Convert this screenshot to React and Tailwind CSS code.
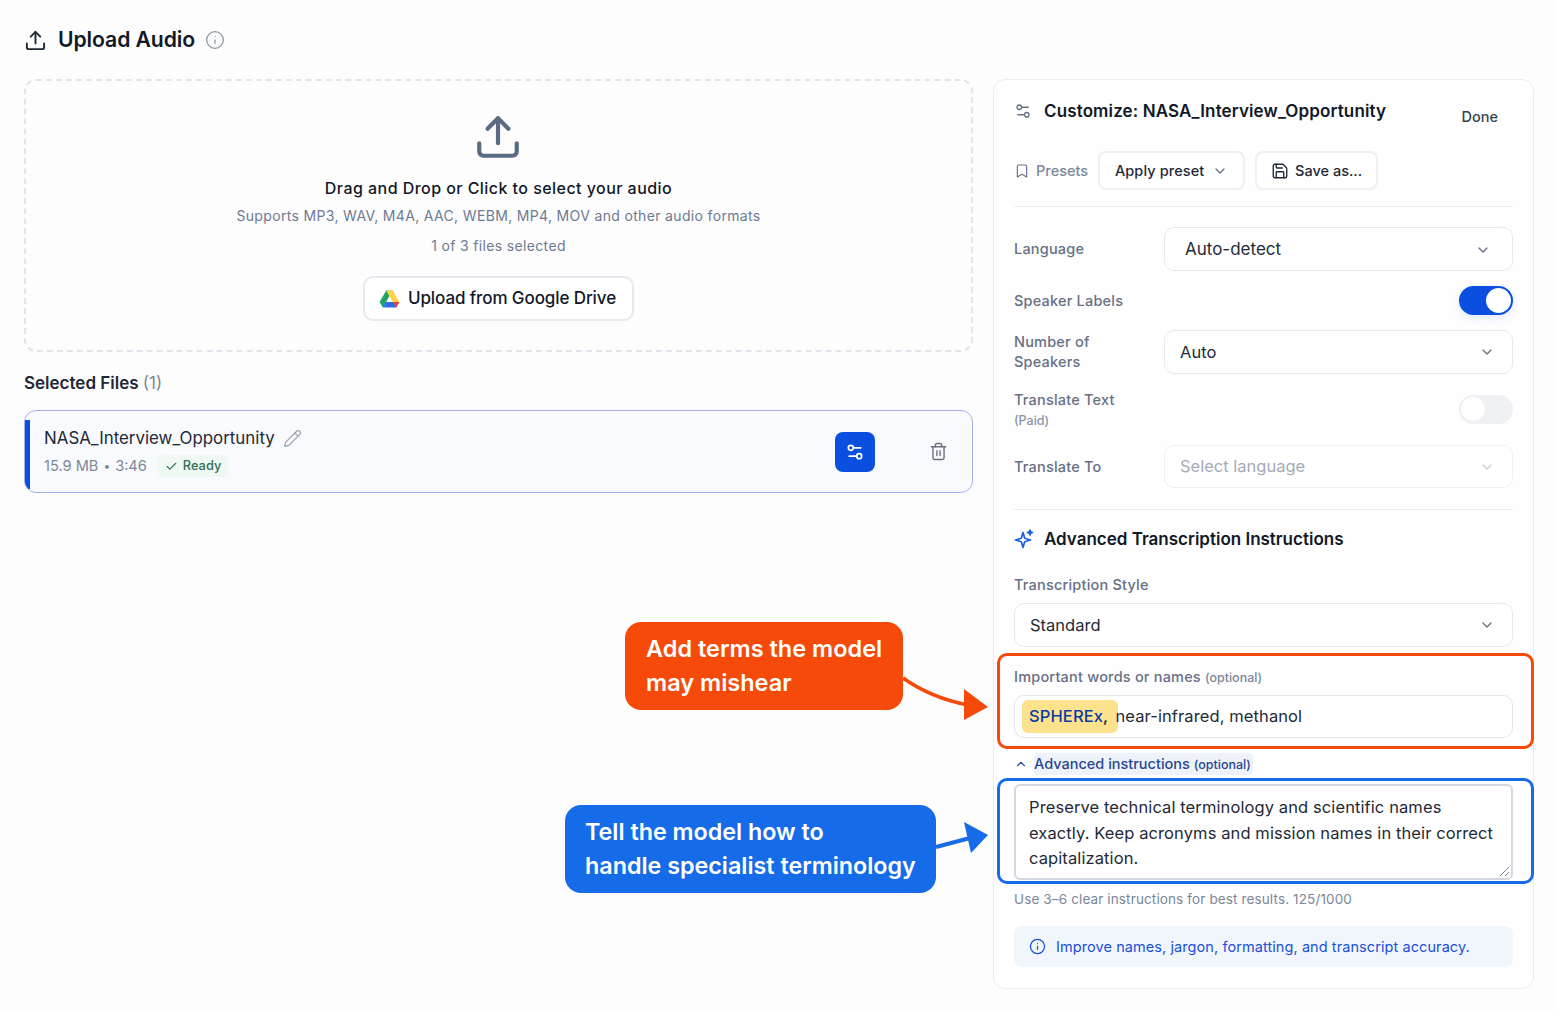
import React from 'react';
import { ChevronDown, ChevronUp, Upload, Info, Settings2, Trash2, Pencil, Check, Bookmark, Save } from 'lucide-react';

const selectCls = 'flex items-center justify-between rounded-[10px] border border-[#e6e9ef] bg-white text-[#1f2937]';
const labelCls = 'text-[14.5px] font-medium leading-[20px] tracking-[0.2px] text-[#667085]';

function DriveLogo() {
  return (
    <svg width="21" height="18" viewBox="0 0 21 18" className="shrink-0">
      <path d="M7.2 0.5h6.4L7 12.2l-3.2 5.3L0.6 12z" fill="#1fa463" />
      <path d="M13.6 0.5l6.8 11.5h-6.6L7.2 0.5z" fill="#ffd04b" />
      <path d="M6.8 12h13.6l-3.2 5.5H3.7z" fill="#2b6ee8" />
      <path d="M20.4 12l-3.2 5.5-3.4-5.5z" fill="#e8453c" />
    </svg>
  );
}

function Sparkle() {
  return (
    <svg width="20" height="20" viewBox="0 0 20 20" fill="none" stroke="#1d5fe0" strokeWidth="1.7" strokeLinejoin="round" className="shrink-0">
      <path d="M9 3.5l1.7 5.8 5.8 1.7-5.8 1.7L9 18.5l-1.7-5.8L1.5 11l5.8-1.7z" />
      <path d="M16 1l.6 1.9 1.9.6-1.9.6-.6 1.9-.6-1.9-1.9-.6 1.9-.6z" fill="#1d5fe0" />
    </svg>
  );
}

function Arrows() {
  return (
    <svg width="120" height="240" viewBox="0 0 120 240" className="absolute left-[890px] top-[640px]">
      <path d="M13 38C30 50 52 60 78 65" fill="none" stroke="#f54a0a" strokeWidth="3.5" />
      <path d="M74 49L98 67 74 80z" fill="#f54a0a" />
      <path d="M46 207L80 198" fill="none" stroke="#166be8" strokeWidth="4" />
      <path d="M74 182L98 195 81 213z" fill="#166be8" />
    </svg>
  );
}

export default function App() {
  return (
    <div className="relative h-[1010px] w-full overflow-hidden bg-[#fdfdfe] font-['Inter',sans-serif] text-[#111827]">
      {/* Header */}
      <div className="flex h-[79px] items-center pl-[24px] pt-[1px]">
        <Upload size={23} strokeWidth={2} className="text-[#1f2937]" />
        <h1 className="ml-[11px] text-[21.2px] font-semibold leading-none tracking-[-0.1px] text-[#111827]">Upload Audio</h1>
        <Info size={20} strokeWidth={1.6} className="ml-[10px] text-[#8c97a8]" />
      </div>

      <div className="flex items-start gap-[20px] pl-[24px]">
        {/* Left column */}
        <div className="w-[949px]">
          <div className="flex h-[273px] flex-col items-center rounded-[12px] border-2 border-dashed border-[#e1e5eb] pt-[31px]">
            <Upload size={50} strokeWidth={2} className="-ml-[1px] text-[#5b6b84]" />
            <p className="mt-[14px] text-[16px] font-medium leading-[24px] tracking-[0.45px] text-[#111827]">Drag and Drop or Click to select your audio</p>
            <p className="mt-[4px] text-[14px] leading-[24px] tracking-[0.34px] text-[#6d7a91]">Supports MP3, WAV, M4A, AAC, WEBM, MP4, MOV and other audio formats</p>
            <p className="mt-[6px] text-[14px] leading-[24px] tracking-[0.34px] text-[#6d7a91]">1 of 3 files selected</p>
            <button className="mt-[18px] flex h-[45px] w-[271px] items-center justify-center gap-[8px] rounded-[10px] border-2 border-[#e6e9ef] bg-white pr-[2px] pt-[1px] text-[17px] font-medium tracking-[-0.1px] text-[#111827]">
              <DriveLogo />
              Upload from Google Drive
            </button>
          </div>

          <h2 className="mt-[19px] text-[17px] font-semibold leading-[24px] text-[#1f2937]">
            Selected Files <span className="font-normal text-[#7c8798]">(1)</span>
          </h2>

          <div className="relative mt-[15px] flex h-[83px] items-center overflow-hidden rounded-[12px] border-[1.5px] border-[#a5b1ea] bg-[#f9fafe] pl-[19px] pr-[24.5px]">
            <div className="absolute bottom-[3px] left-0 top-[9px] w-[5px] bg-[#0a4fe0]" />
            <div className="mb-[1px] flex-1">
              <div className="flex items-center gap-[8px]">
                <span className="text-[16.9px] leading-[26px] text-[#1f2937]">NASA_Interview_Opportunity</span>
                <Pencil size={19} strokeWidth={1.5} className="text-[#9aa3b2]" />
              </div>
              <div className="mt-[4px] flex items-center text-[14.6px] leading-[22px] text-[#7c8798]">
                <span>15.9 MB</span>
                <span className="mx-[5px] text-[12px]">•</span>
                <span>3:46</span>
                <span className="ml-[11px] flex h-[22px] items-center gap-[5px] rounded-[5px] bg-[#f0f8f3] px-[7px] text-[12.8px] font-medium text-[#2f6f55]">
                  <Check size={13} strokeWidth={2} />
                  Ready
                </span>
              </div>
            </div>
            <button className="flex h-[40px] w-[40px] items-center justify-center rounded-[8px] bg-[#0a4fe0] text-white">
              <Settings2 size={20} strokeWidth={2} />
            </button>
            <Trash2 size={19} strokeWidth={1.8} className="ml-[54px] text-[#6b7280]" />
          </div>
        </div>

        {/* Right panel */}
        <div className="h-[910px] w-[541px] rounded-[12px] border border-[#e9ecf1] bg-[#fefefe] px-[20px]">
          <div className="flex items-start justify-between pr-[15px] pt-[19px]">
            <div className="flex items-center gap-[12px]">
              <Settings2 size={18} strokeWidth={1.7} className="text-[#667085]" />
              <span className="text-[17px] font-semibold leading-[24px] tracking-[0.13px] text-[#111827]">Customize: NASA_Interview_Opportunity</span>
            </div>
            <span className="mt-[6px] text-[14.5px] font-medium leading-[24px] text-[#374151]">Done</span>
          </div>

          <div className="mt-[22px] flex h-[39px] items-center">
            <Bookmark size={16} strokeWidth={1.7} className="text-[#667085]" />
            <span className="ml-[6px] text-[14.5px] font-medium text-[#7c8798]">Presets</span>
            <button className="ml-[10px] flex h-[39px] w-[147px] items-center justify-center gap-[8px] rounded-[8px] border-2 border-[#eef0f4] bg-white text-[14.5px] font-medium tracking-[0.1px] text-[#1f2937]">
              Apply preset <ChevronDown size={16} className="text-[#667085]" />
            </button>
            <button className="ml-[10px] flex h-[39px] w-[123px] items-center justify-center gap-[6px] rounded-[8px] border-2 border-[#eef0f4] bg-white text-[14.5px] font-medium text-[#1f2937]">
              <Save size={18} strokeWidth={1.8} /> Save as...
            </button>
          </div>

          <div className="mt-[16px] border-t border-[#eceef2]" />

          <div className="mt-[20px] flex items-center justify-between">
            <span className={labelCls}>Language</span>
            <div className={selectCls + ' h-[44px] w-[349px] pl-[20px] pr-[21px] pt-[1px] text-[17px]'}>
              Auto-detect <ChevronDown size={16} className="text-[#667085]" />
            </div>
          </div>

          <div className="mt-[15px] flex h-[29px] items-center justify-between">
            <span className={labelCls}>Speaker Labels</span>
            <div className="flex h-[29px] w-[54px] items-center justify-end rounded-full bg-[#0a4fe0] pr-[2px] shadow-[0_3px_8px_rgba(10,79,224,0.12)]">
              <div className="h-[25px] w-[25px] rounded-full bg-white" />
            </div>
          </div>

          <div className="mt-[15px] flex items-center justify-between">
            <span className={labelCls + ' w-[110px]'}>Number of Speakers</span>
            <div className={selectCls + ' h-[44px] w-[349px] pl-[15px] pr-[17px] text-[16.5px]'}>
              Auto <ChevronDown size={16} className="text-[#667085]" />
            </div>
          </div>

          <div className="mt-[21px] flex h-[28px] items-center justify-between">
            <div className={labelCls}>
              Translate Text
              <div className="mt-[3px] text-[12.5px] leading-[16px] tracking-normal text-[#8a94a6]">(Paid)</div>
            </div>
            <div className="flex h-[29px] w-[54px] items-center rounded-full bg-[#eef0f3] pl-[1px]">
              <div className="h-[26px] w-[26px] rounded-full border border-[#eef0f3] bg-white" />
            </div>
          </div>

          <div className="mt-[22px] flex items-center justify-between">
            <span className={labelCls}>Translate To</span>
            <div className="flex h-[43px] w-[349px] items-center justify-between rounded-[10px] border border-[#eef0f4] bg-white pl-[15px] pr-[17px] text-[16.5px] text-[#a3abb8]">
              Select language <ChevronDown size={16} className="text-[#c5cad3]" />
            </div>
          </div>

          <div className="mt-[21px] border-t border-[#eceef2]" />

          <div className="mt-[17px] flex h-[24px] items-center gap-[10px]">
            <Sparkle />
            <span className="text-[17px] font-semibold leading-[24px] text-[#111827]">Advanced Transcription Instructions</span>
          </div>

          <p className={labelCls + ' mt-[24px]'}>Transcription Style</p>
          <div className={selectCls + ' mt-[8px] h-[44px] pl-[15px] pr-[17px] text-[16.5px]'}>
            Standard <ChevronDown size={16} className="text-[#667085]" />
          </div>

          {/* Important words */}
          <div className="relative ml-[-17px] mr-[-21px] mt-[6px] h-[96px] rounded-[10px] border-[3px] border-[#f54a0a] pl-[14px] pr-[18px] pt-[11px]">
            <p className={labelCls}>
              Important words or names <span className="text-[12.5px] tracking-normal text-[#7c8798]">(optional)</span>
            </p>
            <div className="mt-[7px] flex h-[43px] items-center rounded-[10px] border border-[#e2e5ec] bg-white pl-[7px] text-[16.5px] tracking-[0.1px] text-[#1f2937]">
              <span className="mr-[-3px] flex h-[33px] items-center whitespace-pre rounded-[6px] bg-[#fde28e] pl-[7px] pr-[6px] font-medium text-[#0a3aa8]">SPHEREx<span className="text-[#1f2937]">, </span></span>
              near-infrared, methanol
            </div>
          </div>

          {/* Advanced instructions */}
          <div className="mt-[6px] flex h-[18px] items-center gap-[6px]">
            <ChevronUp size={14} strokeWidth={2} className="text-[#2b4f9e]" />
            <span className="rounded-[4px] bg-[#eef3fb] pr-[2px] text-[14.5px] font-medium text-[#27468f]">
              Advanced instructions <span className="text-[12.5px]">(optional)</span>
            </span>
          </div>

          <div className="relative ml-[-17px] mr-[-21px] mt-[5px] h-[106px] rounded-[10px] border-[3px] border-[#166be8] pl-[14px] pr-[18px] pt-[3px]">
            <div className="relative h-[96px] rounded-[6px] border-2 border-[#d3d8e2] bg-white pl-[13px] pr-[14px] pt-[9px] text-[16.5px] leading-[25.5px] tracking-[0.1px] text-[#1f2937]">
              Preserve technical terminology and scientific names exactly. Keep acronyms and mission names in their correct capitalization.
              <svg width="11" height="11" viewBox="0 0 11 11" className="absolute bottom-[1px] right-[1px]" stroke="#7c8798" strokeWidth="1">
                <path d="M1 10L10 1M6 10L10 6" />
              </svg>
            </div>
          </div>

          <p className="mt-[5px] text-[13.5px] leading-[20px] tracking-[0.13px] text-[#7c8798]">Use 3–6 clear instructions for best results. 125/1000</p>

          <div className="mt-[17px] flex h-[41px] items-center gap-[10px] rounded-[8px] bg-[#f1f6fd] pl-[15px] text-[14.5px] tracking-[0.08px] text-[#1c50d8]">
            <Info size={17} strokeWidth={1.8} />
            Improve names, jargon, formatting, and transcript accuracy.
          </div>
        </div>
      </div>

      {/* Callouts */}
      <div className="absolute left-[625px] top-[622px] h-[88px] w-[278px] rounded-[16px] bg-[#f54a0a] pl-[21px] pt-[10px] text-[23.5px] font-semibold leading-[34px] text-white">
        Add terms the model<br />may mishear
      </div>
      <div className="absolute left-[565px] top-[805px] h-[88px] w-[371px] rounded-[16px] bg-[#166be8] pl-[20px] pt-[10px] text-[23.3px] font-semibold leading-[34px] text-white">
        Tell the model how to<br />handle specialist terminology
      </div>
      <Arrows />
    </div>
  );
}
